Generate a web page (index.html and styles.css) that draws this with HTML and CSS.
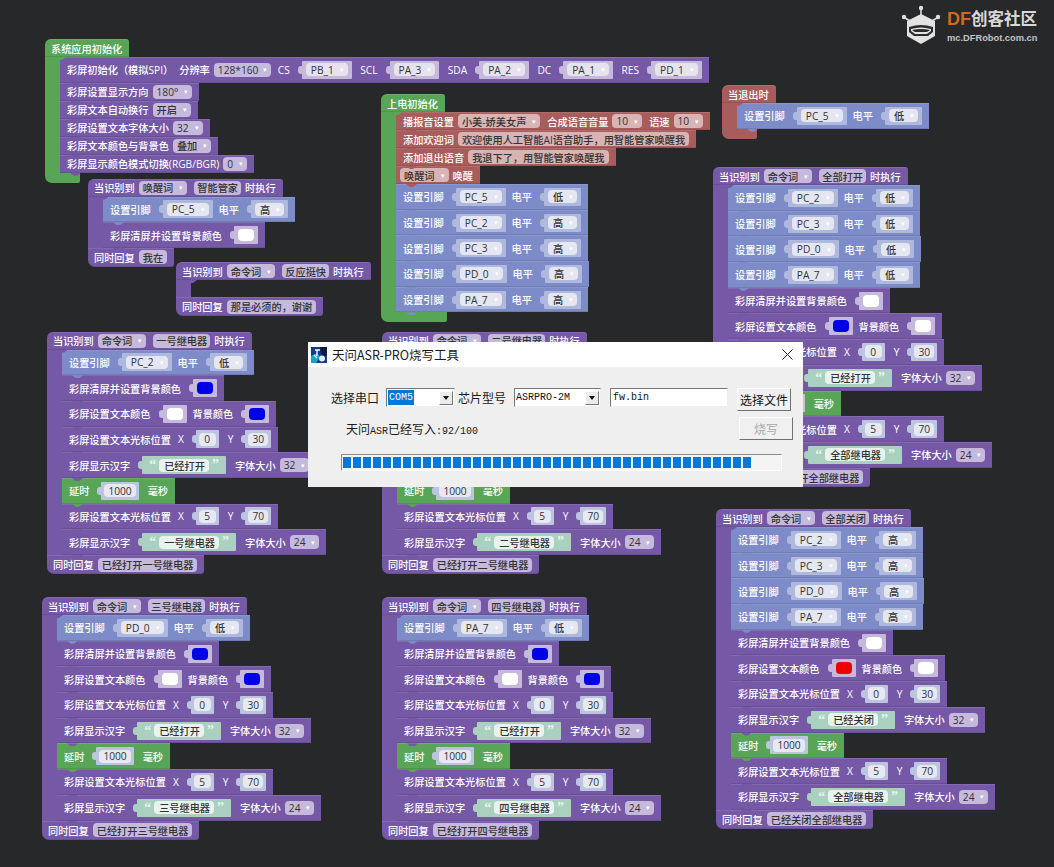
FILE: index.html
```html
<!DOCTYPE html>
<html lang="zh-CN">
<head>
  <meta charset="UTF-8">
  <meta name="viewport" content="width=device-width, initial-scale=1.0">
  <link rel="stylesheet" href="styles.css">
  <title>天问Block</title>
</head>
<body>
  <div class="canvas">

    <div class="logo">
      <svg class="logo-mark" width="40" height="40" viewBox="0 0 40 40">
        <path d="M21 3v8M5 13l7 4M37 13l-7 4" stroke="#ddd" stroke-width="1.6"/>
        <circle cx="21" cy="3" r="2.2" fill="#ddd"/>
        <circle cx="4" cy="12" r="2.2" fill="#ddd"/>
        <circle cx="38" cy="12" r="2.2" fill="#ddd"/>
        <path d="M21 9l14 7v15l-14 8-14-8V16z" fill="#e2e2e2"/>
        <path d="M9 22q12-4 24 0v5l-5 4H14l-5-4z" fill="#2b2b2d"/>
        <path d="M11 24q10-3 20 0v2l-4 3H15l-4-3z" fill="#e2e2e2"/>
        <path d="M12 25q9-2 18 0l-3 2H15z" fill="#2b2b2d"/>
      </svg>
      <div class="logo-text">
        <div class="logo-name"><span class="logo-df">DF</span>创客社区</div>
        <div class="logo-url">mc.DFRobot.com.cn</div>
      </div>
    </div>

    <!-- 系统应用初始化 -->
    <div class="stack at-sys">
      <div class="row head green">系统应用初始化</div>
      <div class="body green-spine">
        <div class="row tall purple pins">彩屏初始化（模拟SPI）<span class="wide">分辨率</span><span class="dd">128*160<i>▾</i></span><span class="x">CS</span><span class="sock"><span class="fld">PB_1<i>▾</i></span></span><span class="x">SCL</span><span class="sock"><span class="fld">PA_3<i>▾</i></span></span><span class="x">SDA</span><span class="sock"><span class="fld">PA_2<i>▾</i></span></span><span class="x">DC</span><span class="sock"><span class="fld">PA_1<i>▾</i></span></span><span class="x">RES</span><span class="sock"><span class="fld">PD_1<i>▾</i></span></span></div>
        <div class="row purple">彩屏设置显示方向<span class="dd">180°<i>▾</i></span></div>
        <div class="row purple">彩屏文本自动换行<span class="dd">开启<i>▾</i></span></div>
        <div class="row purple">彩屏设置文本字体大小<span class="dd">32<i>▾</i></span></div>
        <div class="row purple">彩屏文本颜色与背景色<span class="dd">叠加<i>▾</i></span></div>
        <div class="row purple">彩屏显示颜色模式切换(RGB/BGR)<span class="dd">0<i>▾</i></span></div>
      </div>
      <div class="cap cap-s green"></div>
    </div>

    <!-- 智能管家 -->
    <div class="stack at-wake">
      <div class="row head purple">当识别到<span class="dd">唤醒词<i>▾</i></span><span class="dd txt">智能管家</span>时执行</div>
      <div class="body purple-spine">
        <div class="row tall blue">设置引脚<span class="sock"><span class="fld">PC_5<i>▾</i></span></span>电平<span class="sock"><span class="fld">高<i>▾</i></span></span></div>
        <div class="row tall purple">彩屏清屏并设置背景颜色<span class="sock"><span class="swatch white"></span></span></div>
      </div>
      <div class="row foot purple">同时回复<span class="dd">我在</span></div>
    </div>

    <!-- 反应挺快 -->
    <div class="stack at-quick">
      <div class="row head purple">当识别到<span class="dd">命令词<i>▾</i></span><span class="dd txt">反应挺快</span>时执行</div>
      <div class="body purple-spine empty"></div>
      <div class="row foot purple">同时回复<span class="dd">那是必须的，谢谢</span></div>
    </div>

    <!-- 上电初始化 -->
    <div class="stack at-power">
      <div class="row head green">上电初始化</div>
      <div class="body green-spine">
        <div class="row red">播报音设置<span class="dd">小美-娇美女声<i>▾</i></span><span class="x">合成语音音量</span><span class="dd">10<i>▾</i></span><span class="x">语速</span><span class="dd">10<i>▾</i></span></div>
        <div class="row red">添加欢迎词<span class="dd">欢迎使用人工智能AI语音助手，用智能管家唤醒我</span></div>
        <div class="row red">添加退出语音<span class="dd">我退下了，用智能管家唤醒我</span></div>
        <div class="row red"><span class="dd first">唤醒词<i>▾</i></span>唤醒</div>
        <div class="row tall blue">设置引脚<span class="sock"><span class="fld">PC_5<i>▾</i></span></span>电平<span class="sock"><span class="fld">低<i>▾</i></span></span></div>
        <div class="row tall blue">设置引脚<span class="sock"><span class="fld">PC_2<i>▾</i></span></span>电平<span class="sock"><span class="fld">高<i>▾</i></span></span></div>
        <div class="row tall blue">设置引脚<span class="sock"><span class="fld">PC_3<i>▾</i></span></span>电平<span class="sock"><span class="fld">高<i>▾</i></span></span></div>
        <div class="row tall blue">设置引脚<span class="sock"><span class="fld">PD_0<i>▾</i></span></span>电平<span class="sock"><span class="fld">高<i>▾</i></span></span></div>
        <div class="row tall blue">设置引脚<span class="sock"><span class="fld">PA_7<i>▾</i></span></span>电平<span class="sock"><span class="fld">高<i>▾</i></span></span></div>
      </div>
      <div class="cap cap-m green"></div>
    </div>

    <!-- 当退出时 -->
    <div class="stack at-exit">
      <div class="row head red">当退出时</div>
      <div class="body red-spine">
        <div class="row tall blue">设置引脚<span class="sock"><span class="fld">PC_5<i>▾</i></span></span>电平<span class="sock"><span class="fld">低<i>▾</i></span></span></div>
      </div>
      <div class="cap cap-s red"></div>
    </div>

    <!-- 全部打开 -->
    <div class="stack at-allon">
      <div class="row head purple">当识别到<span class="dd">命令词<i>▾</i></span><span class="dd txt">全部打开</span>时执行</div>
      <div class="body purple-spine">
        <div class="row tall blue">设置引脚<span class="sock"><span class="fld">PC_2<i>▾</i></span></span>电平<span class="sock"><span class="fld">低<i>▾</i></span></span></div>
        <div class="row tall blue">设置引脚<span class="sock"><span class="fld">PC_3<i>▾</i></span></span>电平<span class="sock"><span class="fld">低<i>▾</i></span></span></div>
        <div class="row tall blue">设置引脚<span class="sock"><span class="fld">PD_0<i>▾</i></span></span>电平<span class="sock"><span class="fld">低<i>▾</i></span></span></div>
        <div class="row tall blue">设置引脚<span class="sock"><span class="fld">PA_7<i>▾</i></span></span>电平<span class="sock"><span class="fld">低<i>▾</i></span></span></div>
        <div class="row tall purple">彩屏清屏并设置背景颜色<span class="sock"><span class="swatch white"></span></span></div>
        <div class="row tall purple">彩屏设置文本颜色<span class="sock"><span class="swatch navy"></span></span>背景颜色<span class="sock"><span class="swatch white"></span></span></div>
        <div class="row tall purple">彩屏设置文本光标位置<span class="x">X</span><span class="sock num"><span class="fld">0</span></span><span class="x">Y</span><span class="sock num"><span class="fld">30</span></span></div>
        <div class="row tall purple">彩屏显示汉字<span class="sock str"><b>“</b><span class="fld">已经打开</span><b>”</b></span><span class="x">字体大小</span><span class="dd">32<i>▾</i></span></div>
        <div class="row tall green">延时<span class="sock num"><span class="fld">1000</span></span><span class="x">毫秒</span></div>
        <div class="row tall purple">彩屏设置文本光标位置<span class="x">X</span><span class="sock num"><span class="fld">5</span></span><span class="x">Y</span><span class="sock num"><span class="fld">70</span></span></div>
        <div class="row tall purple">彩屏显示汉字<span class="sock str"><b>“</b><span class="fld">全部继电器</span><b>”</b></span><span class="x">字体大小</span><span class="dd">24<i>▾</i></span></div>
      </div>
      <div class="row foot purple">同时回复<span class="dd">已经打开全部继电器</span></div>
    </div>

    <!-- 一号继电器 -->
    <div class="stack at-one">
      <div class="row head purple">当识别到<span class="dd">命令词<i>▾</i></span><span class="dd txt">一号继电器</span>时执行</div>
      <div class="body purple-spine">
        <div class="row tall blue">设置引脚<span class="sock"><span class="fld">PC_2<i>▾</i></span></span>电平<span class="sock"><span class="fld">低<i>▾</i></span></span></div>
        <div class="row tall purple">彩屏清屏并设置背景颜色<span class="sock"><span class="swatch navy"></span></span></div>
        <div class="row tall purple">彩屏设置文本颜色<span class="sock"><span class="swatch white"></span></span>背景颜色<span class="sock"><span class="swatch navy"></span></span></div>
        <div class="row tall purple">彩屏设置文本光标位置<span class="x">X</span><span class="sock num"><span class="fld">0</span></span><span class="x">Y</span><span class="sock num"><span class="fld">30</span></span></div>
        <div class="row tall purple">彩屏显示汉字<span class="sock str"><b>“</b><span class="fld">已经打开</span><b>”</b></span><span class="x">字体大小</span><span class="dd">32<i>▾</i></span></div>
        <div class="row tall green">延时<span class="sock num"><span class="fld">1000</span></span><span class="x">毫秒</span></div>
        <div class="row tall purple">彩屏设置文本光标位置<span class="x">X</span><span class="sock num"><span class="fld">5</span></span><span class="x">Y</span><span class="sock num"><span class="fld">70</span></span></div>
        <div class="row tall purple">彩屏显示汉字<span class="sock str"><b>“</b><span class="fld">一号继电器</span><b>”</b></span><span class="x">字体大小</span><span class="dd">24<i>▾</i></span></div>
      </div>
      <div class="row foot purple">同时回复<span class="dd">已经打开一号继电器</span></div>
    </div>

    <!-- 二号继电器: the first five rows lie fully under the tool window -->
    <div class="stack at-two">
      <div class="row head purple">当识别到<span class="dd">命令词<i>▾</i></span><span class="dd txt">二号继电器</span>时执行</div>
      <div class="body purple-spine">
        <div class="row tall blue covered">设置引脚<span class="sock"><span class="fld">PC_3<i>▾</i></span></span>电平<span class="sock"><span class="fld">低<i>▾</i></span></span></div>
        <div class="row tall purple covered">彩屏清屏并设置背景颜色<span class="sock"><span class="swatch navy"></span></span></div>
        <div class="row tall purple covered">彩屏设置文本颜色<span class="sock"><span class="swatch white"></span></span>背景颜色<span class="sock"><span class="swatch navy"></span></span></div>
        <div class="row tall purple covered">彩屏设置文本光标位置<span class="x">X</span><span class="sock num"><span class="fld">0</span></span><span class="x">Y</span><span class="sock num"><span class="fld">30</span></span></div>
        <div class="row tall purple covered">彩屏显示汉字<span class="sock str"><b>“</b><span class="fld">已经打开</span><b>”</b></span><span class="x">字体大小</span><span class="dd">32<i>▾</i></span></div>
        <div class="row tall green">延时<span class="sock num"><span class="fld">1000</span></span><span class="x">毫秒</span></div>
        <div class="row tall purple">彩屏设置文本光标位置<span class="x">X</span><span class="sock num"><span class="fld">5</span></span><span class="x">Y</span><span class="sock num"><span class="fld">70</span></span></div>
        <div class="row tall purple">彩屏显示汉字<span class="sock str"><b>“</b><span class="fld">二号继电器</span><b>”</b></span><span class="x">字体大小</span><span class="dd">24<i>▾</i></span></div>
      </div>
      <div class="row foot purple">同时回复<span class="dd">已经打开二号继电器</span></div>
    </div>

    <!-- 三号继电器 -->
    <div class="stack at-three">
      <div class="row head purple">当识别到<span class="dd">命令词<i>▾</i></span><span class="dd txt">三号继电器</span>时执行</div>
      <div class="body purple-spine">
        <div class="row tall blue">设置引脚<span class="sock"><span class="fld">PD_0<i>▾</i></span></span>电平<span class="sock"><span class="fld">低<i>▾</i></span></span></div>
        <div class="row tall purple">彩屏清屏并设置背景颜色<span class="sock"><span class="swatch navy"></span></span></div>
        <div class="row tall purple">彩屏设置文本颜色<span class="sock"><span class="swatch white"></span></span>背景颜色<span class="sock"><span class="swatch navy"></span></span></div>
        <div class="row tall purple">彩屏设置文本光标位置<span class="x">X</span><span class="sock num"><span class="fld">0</span></span><span class="x">Y</span><span class="sock num"><span class="fld">30</span></span></div>
        <div class="row tall purple">彩屏显示汉字<span class="sock str"><b>“</b><span class="fld">已经打开</span><b>”</b></span><span class="x">字体大小</span><span class="dd">32<i>▾</i></span></div>
        <div class="row tall green">延时<span class="sock num"><span class="fld">1000</span></span><span class="x">毫秒</span></div>
        <div class="row tall purple">彩屏设置文本光标位置<span class="x">X</span><span class="sock num"><span class="fld">5</span></span><span class="x">Y</span><span class="sock num"><span class="fld">70</span></span></div>
        <div class="row tall purple">彩屏显示汉字<span class="sock str"><b>“</b><span class="fld">三号继电器</span><b>”</b></span><span class="x">字体大小</span><span class="dd">24<i>▾</i></span></div>
      </div>
      <div class="row foot purple">同时回复<span class="dd">已经打开三号继电器</span></div>
    </div>

    <!-- 四号继电器 -->
    <div class="stack at-four">
      <div class="row head purple">当识别到<span class="dd">命令词<i>▾</i></span><span class="dd txt">四号继电器</span>时执行</div>
      <div class="body purple-spine">
        <div class="row tall blue">设置引脚<span class="sock"><span class="fld">PA_7<i>▾</i></span></span>电平<span class="sock"><span class="fld">低<i>▾</i></span></span></div>
        <div class="row tall purple">彩屏清屏并设置背景颜色<span class="sock"><span class="swatch navy"></span></span></div>
        <div class="row tall purple">彩屏设置文本颜色<span class="sock"><span class="swatch white"></span></span>背景颜色<span class="sock"><span class="swatch navy"></span></span></div>
        <div class="row tall purple">彩屏设置文本光标位置<span class="x">X</span><span class="sock num"><span class="fld">0</span></span><span class="x">Y</span><span class="sock num"><span class="fld">30</span></span></div>
        <div class="row tall purple">彩屏显示汉字<span class="sock str"><b>“</b><span class="fld">已经打开</span><b>”</b></span><span class="x">字体大小</span><span class="dd">32<i>▾</i></span></div>
        <div class="row tall green">延时<span class="sock num"><span class="fld">1000</span></span><span class="x">毫秒</span></div>
        <div class="row tall purple">彩屏设置文本光标位置<span class="x">X</span><span class="sock num"><span class="fld">5</span></span><span class="x">Y</span><span class="sock num"><span class="fld">70</span></span></div>
        <div class="row tall purple">彩屏显示汉字<span class="sock str"><b>“</b><span class="fld">四号继电器</span><b>”</b></span><span class="x">字体大小</span><span class="dd">24<i>▾</i></span></div>
      </div>
      <div class="row foot purple">同时回复<span class="dd">已经打开四号继电器</span></div>
    </div>

    <!-- 全部关闭 -->
    <div class="stack at-alloff">
      <div class="row head purple">当识别到<span class="dd">命令词<i>▾</i></span><span class="dd txt">全部关闭</span>时执行</div>
      <div class="body purple-spine">
        <div class="row tall blue">设置引脚<span class="sock"><span class="fld">PC_2<i>▾</i></span></span>电平<span class="sock"><span class="fld">高<i>▾</i></span></span></div>
        <div class="row tall blue">设置引脚<span class="sock"><span class="fld">PC_3<i>▾</i></span></span>电平<span class="sock"><span class="fld">高<i>▾</i></span></span></div>
        <div class="row tall blue">设置引脚<span class="sock"><span class="fld">PD_0<i>▾</i></span></span>电平<span class="sock"><span class="fld">高<i>▾</i></span></span></div>
        <div class="row tall blue">设置引脚<span class="sock"><span class="fld">PA_7<i>▾</i></span></span>电平<span class="sock"><span class="fld">高<i>▾</i></span></span></div>
        <div class="row tall purple">彩屏清屏并设置背景颜色<span class="sock"><span class="swatch white"></span></span></div>
        <div class="row tall purple">彩屏设置文本颜色<span class="sock"><span class="swatch scarlet"></span></span>背景颜色<span class="sock"><span class="swatch white"></span></span></div>
        <div class="row tall purple">彩屏设置文本光标位置<span class="x">X</span><span class="sock num"><span class="fld">0</span></span><span class="x">Y</span><span class="sock num"><span class="fld">30</span></span></div>
        <div class="row tall purple">彩屏显示汉字<span class="sock str"><b>“</b><span class="fld">已经关闭</span><b>”</b></span><span class="x">字体大小</span><span class="dd">32<i>▾</i></span></div>
        <div class="row tall green">延时<span class="sock num"><span class="fld">1000</span></span><span class="x">毫秒</span></div>
        <div class="row tall purple">彩屏设置文本光标位置<span class="x">X</span><span class="sock num"><span class="fld">5</span></span><span class="x">Y</span><span class="sock num"><span class="fld">70</span></span></div>
        <div class="row tall purple">彩屏显示汉字<span class="sock str"><b>“</b><span class="fld">全部继电器</span><b>”</b></span><span class="x">字体大小</span><span class="dd">24<i>▾</i></span></div>
      </div>
      <div class="row foot purple">同时回复<span class="dd">已经关闭全部继电器</span></div>
    </div>

    <!-- 烧写工具窗口 -->
    <div class="dialog">
      <div class="titlebar">
        <svg class="app-icon" width="16" height="16" viewBox="0 0 16 16">
          <rect width="16" height="16" fill="#123a8c"/>
          <path d="M0 9l6-3 3 4-4 6H0z" fill="#17a3c4"/>
          <path d="M9 0h7v8l-3 2-3-4z" fill="#0b1a3d"/>
          <circle cx="11" cy="11.500" r="3" fill="#dfeaf2"/>
          <path d="M4 3h5M6 3v6M3 8l3 3" stroke="#fff" stroke-width="1.300" fill="none"/>
        </svg>
        <span class="title">天问ASR-PRO烧写工具</span>
        <svg class="close" width="11" height="11" viewBox="0 0 11 11">
          <path d="M.5.5l10 10M10.500.5l-10 10" stroke="#222" stroke-width="1"/>
        </svg>
      </div>
      <div class="dlg-body">
        <div class="dlg-row">
          <span class="dlg-label">选择串口</span>
          <div class="combo combo-port"><span class="sel">COM5</span><span class="arrow"></span></div>
          <span class="dlg-label chip">芯片型号</span>
          <div class="combo combo-chip"><span>ASRPRO-2M</span><span class="arrow"></span></div>
          <div class="file-input">fw.bin</div>
          <button class="win-btn pick">选择文件</button>
        </div>
        <div class="dlg-row second">
          <span class="status">天问<span class="mono">ASR</span>已经写入<span class="mono">:92/100</span></span>
          <button class="win-btn burn" disabled>烧写</button>
        </div>
        <div class="progress"><div class="progress-fill"></div></div>
      </div>
    </div>

  </div>
</body>
</html>
```
FILE: styles.css
```css
* {
  box-sizing: border-box;
}

body {
  margin: 0;
  background-color: #27282a;
}

.canvas {
  position: relative;
  width: 1054px;
  height: 867px;
  overflow: hidden;
  font-family: "Open Sans", "Noto Sans CJK SC", sans-serif;
  font-size: 10.2px;
}

/* logo */
.logo {
  position: absolute;
  left: 900px;
  top: 5px;
  display: flex;
  gap: 7px;
}

.logo-text {
  padding-top: 3px;
}

.logo-name {
  font-size: 16.5px;
  font-weight: 700;
  line-height: 22px;
  color: #d8d8d8;
  white-space: nowrap;
}

.logo-df {
  color: #cf6a22;
  font-family: "Liberation Sans", sans-serif;
  font-size: 18px;
}

.logo-url {
  margin-top: 3px;
  font-family: "Liberation Sans", sans-serif;
  font-size: 9.300px;
  font-weight: 700;
  color: #c4c4c4;
  white-space: nowrap;
}

/* places of the stacks on the workspace */
.stack {
  position: absolute;
  display: flex;
  flex-direction: column;
  align-items: flex-start;
  font-weight: 500;
}

.at-sys { left: 45px; top: 39px; }
.at-wake { left: 88px; top: 178.500px; }
.at-quick { left: 176px; top: 262px; }
.at-power { left: 381px; top: 94px; }
.at-exit { left: 722px; top: 85px; }
.at-allon { left: 713px; top: 167px; }
.at-one { left: 47px; top: 331.500px; }
.at-two { left: 382px; top: 331.500px; }
.at-three { left: 42px; top: 597px; }
.at-four { left: 382px; top: 597px; }
.at-alloff { left: 716px; top: 509px; }

/* block colours */
.purple { --c: #7558a6; --s: #c5b9dc; --f: #e6e3ef; }
.blue { --c: #7d8cc8; --s: #afb8dd; --f: #e4e6f2; }
.green { --c: #58a558; --s: #b5d6b5; --f: #e6f0e6; }
.red { --c: #a95c5c; --s: #d8b4b4; --f: #efe3e3; }

/* rows */
.row {
  position: relative;
  display: flex;
  align-items: center;
  gap: 4px;
  height: 18px;
  padding: 0 7px;
  background-color: var(--c);
  box-shadow: inset 0 1px rgba(255, 255, 255, 0.1), inset 0 -1px rgba(0, 0, 0, 0.1);
  color: #fff;
  white-space: nowrap;
  width: fit-content;
}

.row::after {
  content: "";
  position: absolute;
  left: 10px;
  bottom: -3px;
  width: 11px;
  height: 3px;
  background-color: var(--c);
  clip-path: polygon(0 0, 100% 0, 65% 100%, 35% 100%);
  z-index: 1;
}

.tall {
  height: 25.700px;
}

.covered {
  visibility: hidden;
}

.head {
  padding-left: 6px;
  border-radius: 6px 3px 0 0;
}

.foot {
  height: 19px;
  padding-left: 6px;
  border-radius: 0 0 3px 7px;
}

.foot::after {
  display: none;
}

.body {
  display: flex;
  flex-direction: column;
  align-items: flex-start;
  border-left: 15px solid transparent;
}

.green-spine { border-left-color: #58a558; }
.purple-spine { border-left-color: #7558a6; }
.red-spine { border-left-color: #a95c5c; }

.empty {
  height: 17px;
}

.cap {
  height: 10px;
  border-radius: 0 0 2px 7px;
  background-color: var(--c);
}

.cap-s { width: 35px; }
.cap-m { width: 66px; }

.x { margin-left: 3px; }
.wide { margin-left: 2px; }
.pins .x { margin-left: 2.400px; }
.pins .dd i { margin-left: 5px; }

/* dropdown and text fields sitting on a block */
.dd {
  display: inline-flex;
  align-items: center;
  height: 14px;
  padding: 0 4px;
  border-radius: 4px;
  background-color: var(--s);
  color: #333;
}

.dd.txt {
  margin-left: 3px;
  padding: 0 3px;
}

.dd.first {
  margin-left: -3px;
}

.dd i,
.fld i {
  margin-left: 6px;
  font-size: 7px;
  font-style: normal;
  color: #fff;
}

/* value blocks with their puzzle tab */
.sock {
  position: relative;
  display: inline-flex;
  align-items: center;
  height: 18px;
  padding: 0 4px;
  margin: 0 2px 0 8px;
  background-color: var(--s);
  border-radius: 1px;
}

.sock:last-child {
  margin-right: 0;
}

.sock::before {
  content: "";
  position: absolute;
  left: -4px;
  top: 5px;
  width: 4px;
  height: 8px;
  border-radius: 3px 0 0 3px;
  background-color: var(--s);
}

.fld {
  display: inline-flex;
  align-items: center;
  height: 13px;
  padding: 0 4px 0 5px;
  border-radius: 4px;
  background-color: var(--f);
  color: #333;
}

.num {
  --s: #bcc4e0;
  --f: #e6e8f2;
  padding: 0 3px;
}

.num .fld {
  padding: 0 4px;
  min-width: 17px;
  justify-content: center;
}

.str {
  --s: #aad0c0;
  --f: #e9f2ee;
  padding: 0 7px;
  gap: 3px;
}

.str b {
  font-family: "Liberation Serif", serif;
  font-size: 14px;
  line-height: 14px;
  color: #e9f6ef;
}

.swatch {
  width: 16px;
  height: 12px;
  border-radius: 4px;
}

.white { background-color: #fff; }
.navy { background-color: #0000e6; }
.scarlet { background-color: #f00000; }

/* flash tool window */
.dialog {
  position: absolute;
  z-index: 5;
  left: 308px;
  top: 342px;
  width: 495px;
  height: 145px;
  background-color: #efefef;
  font-family: "Noto Sans CJK SC", sans-serif;
  font-size: 12px;
  color: #1a1a1a;
}

.titlebar {
  display: flex;
  align-items: center;
  height: 25px;
  padding: 0 10px 0 3px;
  background-color: #fff;
}

.app-icon {
  margin-right: 5px;
}

.title {
  flex: 1;
  font-size: 12.500px;
}

.dlg-body {
  padding: 21px 10px 0 23px;
}

.dlg-row {
  display: flex;
  align-items: flex-start;
  height: 23px;
}

.dlg-label {
  width: 47px;
  line-height: 19px;
  margin-right: 8px;
  white-space: nowrap;
}

.chip {
  margin: 0 9px 0 3px;
}

.combo,
.file-input {
  display: flex;
  align-items: center;
  height: 19px;
  background-color: #fff;
  border: 1px solid;
  border-color: #777 #eee #eee #777;
  font-family: "Liberation Mono", monospace;
  font-size: 10px;
  color: #111;
}

.combo {
  justify-content: space-between;
  padding: 0 1px;
}

.combo-port { width: 69px; }
.combo-chip { width: 87px; margin-right: 9px; }

.sel {
  background-color: #0078d7;
  color: #fff;
  padding: 0 1px;
  width: 26px;
  line-height: 15px;
}

.arrow {
  position: relative;
  width: 14px;
  height: 14px;
  background-color: #ececec;
  border: 1px solid;
  border-color: #fff #777 #777 #fff;
}

.arrow::after {
  content: "";
  position: absolute;
  left: 3px;
  top: 4px;
  border: 3.500px solid transparent;
  border-top: 4px solid #111;
  border-bottom: 0;
}

.file-input {
  width: 118px;
  padding-left: 2px;
  margin-right: 9px;
}

.win-btn {
  width: 54px;
  height: 23px;
  padding: 0;
  background-color: #f0f0f0;
  border: 1px solid;
  border-color: #fff #707070 #707070 #fff;
  font-family: "Noto Sans CJK SC", sans-serif;
  font-size: 12px;
  line-height: 20px;
  color: #111;
}

.second {
  justify-content: space-between;
  margin-top: 6px;
  padding-left: 15px;
}

.status {
  font-size: 12px;
  line-height: 24px;
  white-space: nowrap;
}

.mono {
  font-family: "Liberation Mono", monospace;
  font-size: 10px;
}

.burn {
  color: #a8a8a8;
}

.progress {
  width: 441px;
  height: 17px;
  margin: 14px 0 0 10px;
  padding: 2px 1px;
  background-color: #f4f4f4;
  border: 1px solid;
  border-color: #8a8a8a #fff #fff #8a8a8a;
}

.progress-fill {
  width: 410px;
  height: 100%;
  background-image: repeating-linear-gradient(to right, #0678d7 0, #0678d7 8px, transparent 8px, transparent 10px);
}
```
